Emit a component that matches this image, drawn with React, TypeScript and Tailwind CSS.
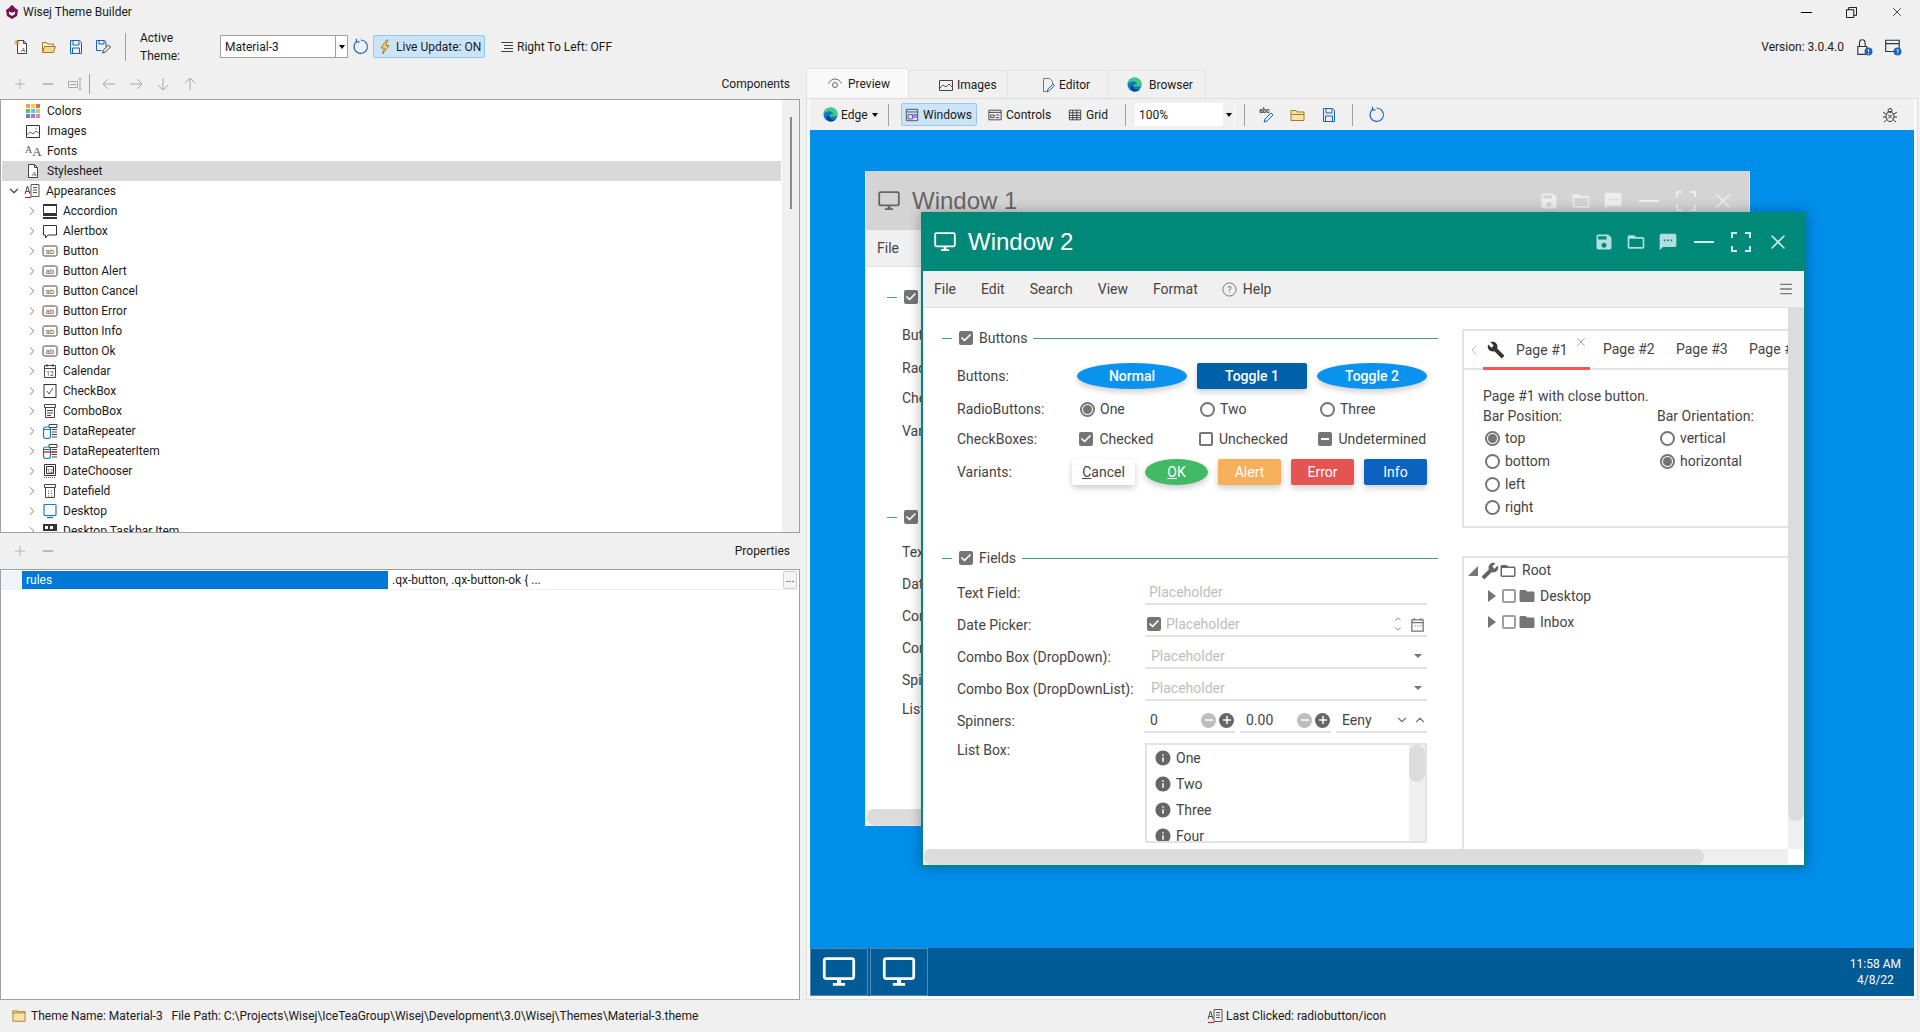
import type { ReactNode } from "react";
import { Check as CheckMark, ChevronDown, ChevronRight, ChevronUp, ChevronLeft, X, Minus, Menu, Plus } from "lucide-react";

type Svg = { className?: string };

const Ic = ({ children, className = "w-4 h-4" }: { children: ReactNode; className?: string }) => (
  <svg viewBox="0 0 16 16" fill="none" className={`shrink-0 ${className}`}>
    {children}
  </svg>
);

const M = ({ d, className = "w-6 h-6" }: { d: string; className?: string }) => (
  <svg viewBox="0 0 24 24" fill="currentColor" className={`shrink-0 ${className}`}>
    <path d={d} />
  </svg>
);

const SAVE = "M17 3H5c-1.11 0-2 .9-2 2v14c0 1.1.89 2 2 2h14c1.1 0 2-.9 2-2V7l-4-4zm-5 16c-1.66 0-3-1.34-3-3s1.34-3 3-3 3 1.34 3 3-1.34 3-3 3zm3-10H5V5h10v4z";
const FOLDER_O = "M20 6h-8l-2-2H4c-1.1 0-1.99.9-1.99 2L2 18c0 1.1.9 2 2 2h16c1.1 0 2-.9 2-2V8c0-1.1-.9-2-2-2zm0 12H4V8h16v10z";
const FOLDER = "M10 4H4c-1.1 0-2 .9-2 2v12c0 1.1.9 2 2 2h16c1.1 0 2-.9 2-2V8c0-1.1-.9-2-2-2h-8l-2-2z";
const SMS = "M20 2H4c-1.1 0-2 .9-2 2v18l4-4h14c1.1 0 2-.9 2-2V4c0-1.1-.9-2-2-2zM9 11H7V9h2v2zm4 0h-2V9h2v2zm4 0h-2V9h2v2z";
const WRENCH = "M22.7 19l-9.1-9.1c.9-2.3.4-5-1.5-6.9-2-2-5-2.4-7.4-1.3L9 6 6 9 1.6 4.7C.4 7.1.9 10.1 2.9 12.1c1.9 1.9 4.6 2.4 6.9 1.5l9.1 9.1c.4.4 1 .4 1.4 0l2.3-2.3c.5-.4.5-1.1.1-1.4z";
const INFO = "M12 2C6.48 2 2 6.48 2 12s4.48 10 10 10 10-4.48 10-10S17.52 2 12 2zm1 15h-2v-6h2v6zm0-8h-2V7h2v2z";

const MonitorIcon = ({ className = "w-6 h-6" }: Svg) => (
  <svg viewBox="0 0 24 22" fill="none" className={`shrink-0 ${className}`}>
    <rect x="1.2" y="1.2" width="21.6" height="14.6" rx="1.5" stroke="currentColor" strokeWidth="2" />
    <path d="M10.5 16.5h3V19h-3zM7.5 19h9v2h-9z" fill="currentColor" />
  </svg>
);

const Doc = ({ color = "#444" }: { color?: string }) => (
  <>
    <path d="M3.5 1.5h6l3 3v10h-9z" stroke={color} fill="#fff" />
    <path d="M9.5 1.5v3h3" stroke={color} />
  </>
);

const SaveOutline = () => (
  <Ic>
    <path d="M2.5 1.5h9l2 2v11h-11z" stroke="#1565c0" />
    <path d="M5 2v4h6V2M4.5 14V9h7v5" stroke="#1565c0" />
  </Ic>
);

const FolderOpen = ({ color = "#a87b14" }: { color?: string }) => (
  <Ic>
    <path d="M1.5 13.5v-10h4l1 1.5h6v2" stroke={color} />
    <path d="M1.5 13.5l2-6h11l-2 6z" stroke={color} fill="#f3d98b" />
  </Ic>
);

const Refresh = () => (
  <Ic className="w-[17px] h-[17px]">
    <path d="M4.4 3.2A6.3 6.3 0 1 0 8 1.9" stroke="#1565c0" strokeWidth="1.1" />
    <path d="M4.2 .8v2.8h2.9" stroke="#1565c0" strokeWidth="1.1" />
  </Ic>
);

const AbIcon = () => (
  <Ic>
    <rect x="1" y="3" width="14" height="10" rx="1.5" stroke="#444" />
    <text x="8" y="10.8" fontSize="7.5" textAnchor="middle" fill="#555" fontFamily="Roboto">ab</text>
  </Ic>
);

const CalIcon = ({ dots = false }: { dots?: boolean }) => (
  <Ic>
    <path d="M2.5 2.5h11v12h-11zM2.5 5.5h11M5 1v3M11 1v3" stroke="#444" />
    <text x="8" y="12.8" fontSize="6.5" textAnchor="middle" fill="#444" fontFamily="Roboto">{dots ? "" : "12"}</text>
  </Ic>
);

const ComboIcon = () => (
  <Ic>
    <path d="M2.5 1.5h11v3h-11zM3.5 4.5h9v10h-9zM5 7.5h6M5 10h6M5 12.5h4" stroke="#444" />
  </Ic>
);

const RepeaterIcon = ({ red = false }: { red?: boolean }) => (
  <Ic>
    <path d="M7 1.5h8v3H7zM10 6.5h5M10 9h5M10 11.5h5M10 14h5" stroke="#444" />
    <rect x="1.5" y="4" width="7" height="11.5" rx="2.5" stroke="#0f7fb5" strokeWidth="1.2" fill="#fff" />
    <path d="M1.5 6.5h7" stroke="#0f7fb5" />
    {red && <path d="M1 9h14" stroke="#e01b1b" strokeWidth="1.3" />}
  </Ic>
);

const TREE_ICONS: Record<string, ReactNode> = {
  accordion: (
    <Ic>
      <path d="M1 1h14v1.5H1zM1 11h14v2H1zM1 14h14v2H1z" fill="#333" />
      <path d="M1.5 2.5h13v8h-13z" stroke="#333" />
    </Ic>
  ),
  alertbox: (
    <Ic>
      <path d="M1.5 2.5h13v9.5H6L3.5 15v-3h-2z" stroke="#333" />
    </Ic>
  ),
  ab: <AbIcon />,
  calendar: <CalIcon />,
  checkbox: (
    <Ic>
      <rect x="2" y="1.5" width="12" height="13" stroke="#333" />
      <path d="M5 8l2 3 4-6" stroke="#555" />
    </Ic>
  ),
  combo: <ComboIcon />,
  repeater: <RepeaterIcon />,
  repeaterItem: <RepeaterIcon red />,
  chooser: (
    <Ic>
      <path d="M2.5 1.5h11v11h-11zM4.5 3.5h7v7h-7z" stroke="#333" />
      <path d="M2 14.5h12" stroke="#666" strokeDasharray="1 1" />
      <text x="8" y="9.5" fontSize="5.5" textAnchor="middle" fill="#333" fontFamily="Roboto">12</text>
    </Ic>
  ),
  datefield: (
    <Ic>
      <path d="M2.5 1.5h11v3h-11zM3.5 4.5h9v10h-9z" stroke="#444" />
      <path d="M6 8h1M9 8h1M6 10.5h1M9 10.5h1M6 13h1M9 13h1" stroke="#555" />
    </Ic>
  ),
  desktop: (
    <Ic>
      <rect x="2" y="1.5" width="12" height="11" rx="1" stroke="#1976d2" strokeWidth="1.2" />
      <path d="M5 14.5h6" stroke="#1976d2" strokeWidth="1.4" />
    </Ic>
  ),
  taskbar: (
    <Ic>
      <path d="M1 1h14v7H1zM1 10h14v1.5H1z" fill="#333" />
      <path d="M3 3h3v3H3zM8 3h3v3H8z" fill="#fff" />
    </Ic>
  ),
};

const CHILDREN: [string, string][] = [
  ["Accordion", "accordion"],
  ["Alertbox", "alertbox"],
  ["Button", "ab"],
  ["Button Alert", "ab"],
  ["Button Cancel", "ab"],
  ["Button Error", "ab"],
  ["Button Info", "ab"],
  ["Button Ok", "ab"],
  ["Calendar", "calendar"],
  ["CheckBox", "checkbox"],
  ["ComboBox", "combo"],
  ["DataRepeater", "repeater"],
  ["DataRepeaterItem", "repeaterItem"],
  ["DateChooser", "chooser"],
  ["Datefield", "datefield"],
  ["Desktop", "desktop"],
  ["Desktop Taskbar Item", "taskbar"],
];

const SWATCH = ["#f3a14b", "#f6d04d", "#e8655a", "#5bbf6a", "#62c4e0", "#b3d46a", "#5a86d8", "#a07bd6", "#e883b5"];

const AppearIcon = () => (
  <Ic>
    <path d="M1 11l2.5-8L6 11M2 8.5h3" stroke="#444" />
    <path d="M7 1.5h8v12H7zM9 4.5h4M9 7h4M9 9.5h4" stroke="#555" />
    <path d="M1 14.5h6" stroke="#d81b1b" strokeWidth="1.2" />
  </Ic>
);

function TopItem({ label, icon, active }: { label: string; icon: ReactNode; active?: boolean }) {
  return (
    <div className={`h-5 flex items-center pl-[23px] ml-px mr-[18px] ${active ? "bg-[#d9d9d9]" : ""}`}>
      {icon}
      <span className="ml-1.5">{label}</span>
    </div>
  );
}

function ThemeTree() {
  return (
    <div className="relative h-[434px] border border-[#a0a0a0] bg-white overflow-hidden pt-px">
      <TopItem
        label="Colors"
        icon={
          <div className="w-4 h-4 grid grid-cols-3 gap-px p-px shrink-0">
            {SWATCH.map((c) => (
              <span key={c} style={{ backgroundColor: c }} />
            ))}
          </div>
        }
      />
      <TopItem
        label="Images"
        icon={
          <Ic>
            <path d="M1.5 2.5h13v12h-13z" stroke="#333" />
            <path d="M2 12l3-3 3 2 3-3 3 2" stroke="#2a79c9" />
            <circle cx="11" cy="5.5" r="1" fill="#e0a030" />
          </Ic>
        }
      />
      <TopItem
        label="Fonts"
        icon={
          <span className="w-4 shrink-0 font-['Liberation_Serif',serif] text-[#555] text-[13px] leading-none">
            <span className="text-[10px] align-top">A</span>A
          </span>
        }
      />
      <TopItem
        label="Stylesheet"
        active
        icon={
          <Ic>
            <Doc />
            <text x="9" y="13" fontSize="7" fontStyle="italic" textAnchor="middle" fill="#333" fontFamily="Liberation Serif">A</text>
          </Ic>
        }
      />
      <div className="h-5 flex items-center pl-[6px]">
        <ChevronDown className="w-3.5 h-3.5 text-[#444]" strokeWidth={2} />
        <span className="ml-[3px]">
          <AppearIcon />
        </span>
        <span className="ml-[6px]">Appearances</span>
      </div>
      {CHILDREN.map(([name, icon]) => (
        <div key={name} className="h-5 flex items-center pl-[24px]">
          <ChevronRight className="w-3.5 h-3.5 text-[#777]" strokeWidth={1.5} />
          <span className="ml-[3px]">{TREE_ICONS[icon]}</span>
          <span className="ml-[5px] whitespace-nowrap">{name}</span>
        </div>
      ))}
      <div className="absolute right-0 top-0 bottom-0 w-[17px] bg-[#f0f0f0]">
        <div className="mt-[17px] mx-auto w-[2px] h-[92px] bg-[#8a8a8a]" />
      </div>
    </div>
  );
}

const Gray = "#a8a8a8";

function LeftToolbar() {
  return (
    <div className="h-[31px] flex items-center pl-[12px] pr-[10px]">
      <Plus className="w-4 h-4 text-[#a8a8a8]" strokeWidth={1.2} />
      <Minus className="w-4 h-4 ml-[12px] text-[#a8a8a8]" strokeWidth={2} />
      <span className="ml-[11px]">
        <Ic>
          <path d="M1.5 5.5h9v6h-9zM13 3v10M11.5 3h3M11.5 13h3M3 8.5h6" stroke={Gray} />
        </Ic>
      </span>
      <div className="ml-[6px] w-px h-[20px] bg-[#a0a0a0]" />
      <div className="ml-[11px] flex gap-[11px]">
        {["M14 8H2M7 3L2 8l5 5", "M2 8h12M9 3l5 5-5 5", "M8 2v12M3 9l5 5 5-5", "M8 14V2M3 7l5-5 5 5"].map((d) => (
          <Ic key={d}>
            <path d={d} stroke={Gray} />
          </Ic>
        ))}
      </div>
      <span className="ml-auto text-[#222]">Components</span>
    </div>
  );
}

function PropertyGrid() {
  return (
    <div className="flex-1 border border-[#a0a0a0] bg-white pt-px">
      <div className="h-[19px] flex border-b border-[#f0f0f0]">
        <div className="w-[21px] bg-[#f0f4fa]" />
        <div className="w-[366px] bg-[#0078d7] text-white pl-[4px] leading-[18px]">rules</div>
        <div className="pl-[4px] leading-[18px] flex-1">.qx-button, .qx-button-ok {"{"} ...</div>
        <div className="w-[14px] mr-[2px] bg-[#f5f5f5] border border-[#d0d0d0] rounded-[2px] text-center leading-[14px] text-[11px]">...</div>
      </div>
    </div>
  );
}

function TopToolbar() {
  return (
    <div className="h-[44px] flex items-center pl-[8px] pt-[1px]">
      <div className="w-[27px] flex justify-center">
        <Ic>
          <Doc />
          <text x="9" y="13" fontSize="7" fontStyle="italic" textAnchor="middle" fill="#333" fontFamily="Liberation Serif">A</text>
          <path d="M3 1v5M.5 3.5h5M1 1.5l4 4M5 1.5l-4 4" stroke="#c98a1a" strokeWidth=".8" />
        </Ic>
      </div>
      <div className="w-[27px] flex justify-center"><FolderOpen /></div>
      <div className="w-[27px] flex justify-center"><SaveOutline /></div>
      <div className="w-[27px] flex justify-center">
        <Ic>
          <path d="M1.5 1.5h8l1.5 1.5v5M1.5 1.5v10h5" stroke="#1565c0" />
          <path d="M4 2v3h5V2" stroke="#1565c0" />
          <path d="M7.5 14l1-3 5-5 2 2-5 5z" stroke="#444" />
        </Ic>
      </div>
      <div className="ml-[9px] w-px h-[28px] bg-[#a0a0a0]" />
      <span className="ml-[14px] w-[75px]">Active Theme:</span>
      <div className="ml-[5px] w-[128px] h-[23px] border border-[#a0a0a0] bg-white flex items-center pl-1">
        <span className="flex-1">Material-3</span>
        <div className="w-[12px] h-full border-l border-[#a0a0a0] flex items-center justify-center">
          <span className="border-x-[3px] border-t-[4px] border-x-transparent border-t-black" />
        </div>
      </div>
      <div className="ml-[4px]"><Refresh /></div>
      <div className="ml-[4px] w-[112px] h-[23px] rounded-[2px] border border-[#90c8f6] bg-[#cce4f7] flex items-center pl-[3px]">
        <Ic>
          <path d="M9.5 1L4 9h3.5L5.5 15 12 6.5H8.5L11 1z" stroke="#a87b14" fill="#f3d98b" />
        </Ic>
        <span className="ml-[3px]">Live Update: ON</span>
      </div>
      <div className="ml-[13px]">
        <Ic>
          <path d="M3 3.5h12M6 6.5h9M6 9.5h9M3 12.5h12" stroke="#444" />
        </Ic>
      </div>
      <span className="ml-[3px]">Right To Left: OFF</span>
      <span className="ml-auto">Version: 3.0.4.0</span>
      <div className="ml-[11px]">
        <Ic className="w-[18px] h-[18px]">
          <path d="M2.5 7.5h8v7h-8zM4 7.5V4a2.5 2.5 0 0 1 5 0v3.5" stroke="#333" />
          <circle cx="12" cy="12" r="3.5" fill="#1565c0" />
          <path d="M12 10v2.5M12 13.5v1" stroke="#fff" />
        </Ic>
      </div>
      <div className="ml-[11px] mr-[18px]">
        <Ic className="w-[18px] h-[18px]">
          <path d="M1.5 2h12v10h-12zM1.5 5h12" stroke="#333" />
          <circle cx="12" cy="12" r="3.5" fill="#1565c0" />
          <path d="M11 11a1 1 0 1 1 1 1.4v.6M12 14v.6" stroke="#fff" strokeWidth=".8" />
        </Ic>
      </div>
    </div>
  );
}

const TABS = [
  { name: "Images", w: "w-[99px]", pad: "pl-[29px]", icon: <Ic><path d="M1.5 3.5h13v10h-13z" stroke="#444" /><path d="M2 11l3-3 3 2 3-3 3 3" stroke="#555" /></Ic> },
  { name: "Editor", w: "w-[100px]", pad: "pl-[32px]", icon: <Ic><path d="M3.5 1.5h6l3 3v3M3.5 1.5v13h3" stroke="#777" /><path d="M7 15l1-3 5-5 1.5 1.5-5 5z" stroke="#1565c0" /></Ic> },
];

function EdgeLogo({ className = "w-[15px] h-[15px]" }: Svg) {
  return (
    <svg viewBox="0 0 16 16" className={`shrink-0 ${className}`}>
      <circle cx="8" cy="8" r="7.5" fill="#0c7bc7" />
      <path d="M1 7c1-4 4-6.5 7.5-6.5S15.500 3 15.500 8c0 1-1 2-3 2H7c0-3 4-3 4-1 0-3-2-5-5-4.500C3.500 5 2 6 1 7z" fill="#3fcf80" />
      <path d="M7 10c0 3 3 4.500 7 3-1.500 1.500-3.500 2.500-6 2.500C5 15.500 3 12 4.500 9 5.500 9.500 6.500 9.500 7 10z" fill="#0a3f8a" />
    </svg>
  );
}

function PreviewTabs() {
  return (
    <div className="h-[30px] flex items-end">
      <div className="w-[103px] h-[30px] bg-[#f9f9f9] border border-b-0 border-[#e2e2e2] flex items-center pl-[20px] rounded-t-[2px]">
        <Ic>
          <path d="M1.5 7.500C3 4.500 5.500 3 8 3s5 1.500 6.500 4.500" stroke="#666" />
          <circle cx="8" cy="9" r="2.500" stroke="#666" />
        </Ic>
        <span className="ml-[5px]">Preview</span>
      </div>
      {TABS.map((t) => (
        <div key={t.name} className={`${t.w} ${t.pad} h-[28px] border border-l-0 border-b-0 border-[#e2e2e2] flex items-center`}>
          {t.icon}
          <span className="ml-[3px]">{t.name}</span>
        </div>
      ))}
      <div className="w-[98px] h-[28px] pl-[19px] border border-l-0 border-b-0 border-[#e2e2e2] flex items-center">
        <EdgeLogo />
        <span className="ml-[7px]">Browser</span>
      </div>
    </div>
  );
}

const Sep = ({ className = "" }: { className?: string }) => <div className={`w-px h-[22px] bg-[#a0a0a0] ${className}`} />;

function PreviewToolbar() {
  return (
    <div className="h-[31px] bg-[#f0f0f0] flex items-center">
      <span className="ml-[13px]"><EdgeLogo /></span>
      <span className="ml-[3px] w-[26px]">Edge</span>
      <span className="ml-[5px] border-x-[3px] border-t-[4px] border-x-transparent border-t-black" />
      <Sep className="ml-[10px]" />
      <div className="ml-[12px] w-[76px] h-[23px] rounded-[2px] border border-[#90c8f6] bg-[#cce4f7] flex items-center pl-[3px]">
        <Ic className="w-[14px] h-[14px]">
          <path d="M1.500 1.500h13v13h-13zM1.500 4.500h13" stroke="#444" />
          <path d="M3.500 7.500h5v5h-5zM10 7.500h3v3h-3z" stroke="#6a3fb5" />
        </Ic>
        <span className="ml-[4px]">Windows</span>
      </div>
      <span className="ml-[11px]">
        <Ic className="w-[14px] h-[14px]">
          <path d="M1 2.500h14v11H1zM1 5h14M3 8h4v3H3zM9 8h4M9 11h4" stroke="#333" />
        </Ic>
      </span>
      <span className="ml-[4px] w-[46px]">Controls</span>
      <span className="ml-[16px]">
        <Ic className="w-[14px] h-[14px]">
          <path d="M1.500 2.500h13v11h-13zM1.500 5.500h13M1.500 8.500h13M1.500 11h13M5.500 2.500v11M10 2.500v11" stroke="#333" />
        </Ic>
      </span>
      <span className="ml-[4px] w-[22px]">Grid</span>
      <Sep className="ml-[17px]" />
      <div className="ml-[9px] w-[100px] h-[23px] bg-white flex items-center pl-[4px]">
        <span className="flex-1">100%</span>
        <div className="w-[11px] mr-px h-full bg-[#f0f0f0] flex items-center justify-center">
          <span className="border-x-[3px] border-t-[4px] border-x-transparent border-t-black" />
        </div>
      </div>
      <Sep className="ml-[9px]" />
      <span className="ml-[14px]">
        <Ic>
          <text x="5.500" y="6" fontSize="6.500" fontWeight="700" textAnchor="middle" fill="#333" fontFamily="Roboto">abc</text>
          <path d="M5 15l1-3 6-6 2 2-6 6z" stroke="#1565c0" />
        </Ic>
      </span>
      <span className="ml-[15px]">
        <Ic>
          <path d="M1 13.500v-10h5l1 1.500h7v8.500zM1 7.500h13" stroke="#a87b14" fill="#f5e3ad" />
        </Ic>
      </span>
      <span className="ml-[15px]"><SaveOutline /></span>
      <Sep className="ml-[15px]" />
      <span className="ml-[15px]"><Refresh /></span>
      <span className="ml-auto mr-[16px]">
        <Ic>
          <ellipse cx="8" cy="9.500" rx="4" ry="5" stroke="#333" />
          <circle cx="8" cy="3.500" r="2" stroke="#333" />
          <path d="M1 5l3 2M15 5l-3 2M1 10h3M15 10h-3M2 15l2.500-2M14 15l-2.500-2M6 7.500l4 4M10 7.500l-4 4" stroke="#333" />
        </Ic>
      </span>
    </div>
  );
}

function FormCheck({ state = "on", className = "" }: { state?: "on" | "off" | "mid"; className?: string }) {
  if (state === "off") return <span className={`w-[14px] h-[14px] shrink-0 border-2 border-[#757575] rounded-[2px] ${className}`} />;
  return (
    <span className={`w-[14px] h-[14px] shrink-0 bg-[#757575] rounded-[2px] flex items-center justify-center ${className}`}>
      {state === "on" ? <CheckMark className="w-[12px] h-[12px] text-white" strokeWidth={3.5} /> : <span className="w-2 h-[2px] bg-white" />}
    </span>
  );
}

function Radio({ on, label, className = "" }: { on?: boolean; label: string; className?: string }) {
  return (
    <div className={`flex items-center ${className}`}>
      <span className="w-[15px] h-[15px] shrink-0 rounded-full border-2 border-[#757575] flex items-center justify-center">
        {on && <span className="w-[9px] h-[9px] rounded-full bg-[#757575]" />}
      </span>
      <span className="ml-[5px]">{label}</span>
    </div>
  );
}

function Legend({ label, active }: { label: string; active: boolean }) {
  return (
    <div className="h-5 flex items-center">
      <span className="w-[10px] h-px bg-[#3aa76d]" />
      <FormCheck className="ml-[7px]" />
      <span className="ml-[6px]">{active ? label : ""}</span>
      {active && <span className="ml-[6px] flex-1 h-px bg-[#3aa76d]" />}
    </div>
  );
}

const raised = "shadow-[0_3px_6px_rgba(0,0,0,0.2)]";

function FieldRow({ label, children }: { label: string; children: ReactNode }) {
  return (
    <div className="h-8 flex items-end">
      <span className="w-[188px] h-[24px] flex items-center pt-px">{label}</span>
      <div className="w-[282px] h-[24px] border-b-2 border-[#e3e3e3] flex items-center text-[#bdbdbd]">{children}</div>
    </div>
  );
}

const Caret = () => <span className="ml-auto mr-[5px] border-x-[4px] border-t-[4px] border-x-transparent border-t-[#757575]" />;

function SpinBtns() {
  return (
    <div className="ml-auto flex gap-[3px] mr-[1px]">
      <span className="w-[15px] h-[15px] rounded-full bg-[#bdbdbd] flex items-center justify-center"><Minus className="w-3 h-3 text-white" strokeWidth={3} /></span>
      <span className="w-[15px] h-[15px] rounded-full bg-[#666] flex items-center justify-center"><Plus className="w-3 h-3 text-white" strokeWidth={3} /></span>
    </div>
  );
}

function WindowForm() {
  return (
    <div className="w-[539px] shrink-0 pl-[19px] pr-[24px] pt-[20px] overflow-hidden">
      <Legend label="Buttons" active />
      <div className="pl-[15px]">
        <div className="mt-[15px] flex items-center h-[26px]">
          <span className="w-[120px]">Buttons:</span>
          <div className="flex gap-[10px] text-white font-medium">
            <span className={`w-[110px] h-[26px] rounded-[50%] bg-[#0a93ee] flex items-center justify-center ${raised}`}>Normal</span>
            <span className={`w-[110px] h-[26px] rounded-[2px] bg-[#0060a8] flex items-center justify-center ${raised}`}>Toggle 1</span>
            <span className={`w-[110px] h-[26px] rounded-[50%] bg-[#0a93ee] flex items-center justify-center ${raised}`}>Toggle 2</span>
          </div>
        </div>
        <div className="mt-2 flex items-center h-6">
          <span className="w-[123px]">RadioButtons:</span>
          <Radio on label="One" className="w-[120px]" />
          <Radio label="Two" className="w-[120px]" />
          <Radio label="Three" />
        </div>
        <div className="mt-1.5 flex items-center h-6">
          <span className="w-[123px]">CheckBoxes:</span>
          {([["on", "Checked"], ["off", "Unchecked"], ["mid", "Undetermined"]] as const).map(([s, l]) => (
            <div key={l} className="w-[120px] flex items-center">
              <FormCheck state={s} />
              <span className="ml-[6px]">{l}</span>
            </div>
          ))}
        </div>
        <div className="mt-2 flex items-center h-[26px]">
          <span className="w-[115px]">Variants:</span>
          <div className="flex gap-[10px]">
            <span className={`w-[63px] h-[26px] rounded-[2px] bg-white flex items-center justify-center ${raised}`}><span><u>C</u>ancel</span></span>
            <span className={`w-[63px] h-[26px] rounded-[50%] bg-[#42b964] text-white flex items-center justify-center ${raised}`}><span><u>O</u>K</span></span>
            <span className={`w-[63px] h-[26px] rounded-[2px] bg-[#f6af5b] text-white flex items-center justify-center ${raised}`}>Alert</span>
            <span className={`w-[63px] h-[26px] rounded-[2px] bg-[#e55353] text-white flex items-center justify-center ${raised}`}>Error</span>
            <span className={`w-[63px] h-[26px] rounded-[2px] bg-[#0b62c0] text-white flex items-center justify-center ${raised}`}>Info</span>
          </div>
        </div>
      </div>
      <div className="mt-[63px]">
        <Legend label="Fields" active />
      </div>
      <div className="pl-[15px] mt-[5px]">
        <FieldRow label="Text Field:"><span className="pl-1">Placeholder</span></FieldRow>
        <FieldRow label="Date Picker:">
          <FormCheck className="ml-[2px]" />
          <span className="ml-[5px]">Placeholder</span>
          <div className="ml-auto flex flex-col text-[#757575]">
            <ChevronUp className="w-3 h-[10px]" />
            <ChevronDown className="w-3 h-[10px]" />
          </div>
          <span className="ml-[6px] mr-[2px] text-[#757575]">
            <Ic className="w-[15px] h-[15px]">
              <path d="M2 3h12v12H2zM2 6h12M4.500 1v2M11.500 1v2M5 9.500h1M8 9.500h1M11 9.500h1" stroke="currentColor" strokeWidth="1.400" />
            </Ic>
          </span>
        </FieldRow>
        <FieldRow label="Combo Box (DropDown):"><span className="pl-[6px]">Placeholder</span><Caret /></FieldRow>
        <FieldRow label="Combo Box (DropDownList):"><span className="pl-[6px]">Placeholder</span><Caret /></FieldRow>
        <div className="h-8 flex items-end">
          <span className="w-[187px] h-[24px] flex items-center pt-px">Spinners:</span>
          <div className="flex gap-[5px] text-[#444]">
            <div className="w-[91px] h-[24px] border-b-2 border-[#e3e3e3] flex items-center pl-[6px]">0<SpinBtns /></div>
            <div className="w-[91px] h-[24px] border-b-2 border-[#e3e3e3] flex items-center pl-[6px]">0.00<SpinBtns /></div>
            <div className="w-[91px] h-[24px] border-b-2 border-[#e3e3e3] flex items-center pl-[6px]">
              Eeny
              <ChevronDown className="ml-auto w-3.5 h-3.5 text-[#757575]" />
              <ChevronUp className="ml-1 w-3.5 h-3.5 text-[#757575]" />
            </div>
          </div>
        </div>
        <div className="mt-[10px] flex">
          <span className="w-[188px] leading-[14px]">List Box:</span>
          <div className="w-[282px] h-[100px] border-2 border-[#e3e3e3] flex overflow-hidden">
            <div className="flex-1 pl-[7px]">
              {["One", "Two", "Three", "Four"].map((t) => (
                <div key={t} className="h-[26px] flex items-center text-[#444]">
                  <M d={INFO} className="w-[18px] h-[18px] text-[#666]" />
                  <span className="ml-[4px]">{t}</span>
                </div>
              ))}
            </div>
            <div className="w-[16px] bg-[#f0f0f0]">
              <div className="h-[37px] rounded-full bg-[#dcdcdc]" />
            </div>
          </div>
        </div>
      </div>
    </div>
  );
}

function WindowSide() {
  return (
    <div className="w-[326px] shrink-0 flex flex-col overflow-hidden">
      <div className="mt-[21px] w-[420px] h-[199px] border-2 border-[#e3e3e3]">
        <div className="h-[39px] border-b-2 border-[#e3e3e3] flex items-end whitespace-nowrap">
          <div className="w-[19px] h-full flex items-center justify-center text-[#bdbdbd]"><ChevronLeft className="w-4 h-4" strokeWidth={1.5} /></div>
          <div className="relative w-[107px] h-full border-b-[3px] border-[#ff5252] mb-[-2px] flex items-center pl-[4px]">
            <M d={WRENCH} className="w-[18px] h-[18px] text-[#333]" />
            <span className="ml-[11px]">Page #1</span>
            <X className="absolute right-[2px] top-[2px] w-3.5 h-3.5 text-[#999]" strokeWidth={1.5} />
          </div>
          <span className="ml-[13px] w-[73px] h-full flex items-center">Page #2</span>
          <span className="w-[73px] h-full flex items-center">Page #3</span>
          <span className="h-full flex items-center">Page #4</span>
        </div>
        <div className="pl-[19px] pt-[16px]">
          <div className="h-5 leading-5">Page #1 with close button.</div>
          <div className="flex">
            <div className="w-[174px]">
              <div className="h-[21px] leading-[21px]">Bar Position:</div>
              {["top", "bottom", "left", "right"].map((p, i) => (
                <Radio key={p} on={i === 0} label={p} className="h-[23px] pl-[2px]" />
              ))}
            </div>
            <div>
              <div className="h-[21px] leading-[21px]">Bar Orientation:</div>
              <Radio label="vertical" className="h-[23px] pl-[3px]" />
              <Radio on label="horizontal" className="h-[23px] pl-[3px]" />
            </div>
          </div>
        </div>
      </div>
      <div className="mt-[28px] w-[420px] flex-1 border-t-2 border-l-2 border-[#e3e3e3]">
        <div className="h-[25px] flex items-center pl-[4px] text-[#444]">
          <span className="w-0 h-0 border-l-[10px] border-b-[10px] border-l-transparent border-b-[#757575]" />
          <M d={WRENCH} className="ml-[3px] w-[18px] h-[18px] text-[#666] -scale-x-100" />
          <M d={FOLDER_O} className="w-[18px] h-[18px] text-[#666]" />
          <span className="ml-[5px]">Root</span>
        </div>
        {["Desktop", "Inbox"].map((n) => (
          <div key={n} className="h-[26px] flex items-center pl-[24px]">
            <span className="w-0 h-0 border-l-[8px] border-y-[6px] border-l-[#757575] border-y-transparent" />
            <span className="ml-[6px] w-[14px] h-[14px] border-2 border-[#9e9e9e] rounded-[2px]" />
            <M d={FOLDER} className="ml-[2px] w-[18px] h-[18px] text-[#757575]" />
            <span className="ml-[4px]">{n}</span>
          </div>
        ))}
      </div>
    </div>
  );
}

function Window({ title, active, className, children }: { title: string; active: boolean; className: string; children: ReactNode }) {
  const btn = active ? "text-[#b2dfdb]" : "text-[#eeeeee]";
  const ctl = active ? "text-[#d0ece8]" : "text-[#eeeeee]";
  return (
    <div className={`absolute w-[885px] h-[655px] flex flex-col bg-white font-['Roboto',sans-serif] text-[14px] text-[#444] ${active ? "border-2 border-t-0 border-[#00897b] shadow-[0_0_12px_rgba(0,0,0,0.3)]" : "border border-t-0 border-[#e8e8e8]"} ${className}`}>
      <div className={`h-[59px] shrink-0 flex items-center ${active ? "bg-[#008979] text-white pl-[11px]" : "bg-[#d4d4d4] text-[#666] pl-[12px]"} font-['Liberation_Sans',sans-serif]`}>
        <MonitorIcon className="w-[22px] h-[20px]" />
        <span className="ml-[12px] text-[24px]">{title}</span>
        <div className={`ml-auto flex items-center ${btn}`}>
          <M d={SAVE} className="w-5 h-5" />
          <M d={FOLDER_O} className="ml-[12px] w-5 h-5" />
          <M d={SMS} className="ml-[12px] w-5 h-5" />
        </div>
        <div className={`flex items-center ml-[16px] mr-[14px] ${ctl}`}>
          <span className="w-[20px] h-[2px] bg-current" />
          <svg viewBox="0 0 20 20" fill="none" stroke="currentColor" strokeWidth="2" className="ml-[17px] w-[20px] h-[20px]">
            <path d="M1 6V1h5M14 1h5v5M19 14v5h-5M6 19H1v-5" />
          </svg>
          <X className="ml-[15px] w-[24px] h-[24px]" strokeWidth={1.6} />
        </div>
      </div>
      <div className="h-[37px] shrink-0 bg-[#f0f0f0] border-b border-[#e0e0e0] flex items-center pl-[11px] gap-[25px]">
        <span>File</span>
        {active && <span>Edit</span>}
        {active && <span>Search</span>}
        {active && <span>View</span>}
        {active && <span>Format</span>}
        {active && (
          <span className="flex items-center -ml-[1px]">
            <Ic className="w-[15px] h-[15px]">
              <circle cx="8" cy="8" r="7" stroke="#757575" />
              <text x="8" y="11.500" fontSize="10" textAnchor="middle" fill="#757575" fontFamily="Roboto">?</text>
            </Ic>
            <span className="ml-[6px]">Help</span>
          </span>
        )}
        {active && <Menu className="ml-auto mr-[10px] w-4 h-4 text-[#757575]" />}
      </div>
      {children}
      <div className="h-4 shrink-0 flex bg-[#efefef]">
        <div className="w-[780px] ml-[1px] h-full rounded-full bg-[#dcdcdc]" />
        <div className="ml-auto w-4 h-full bg-white" />
      </div>
    </div>
  );
}

function Window1Labels() {
  return (
    <div className="flex-1 min-h-0 pl-[21px] pt-[20px]">
      <Legend label="Buttons" active={false} />
      <div className="pl-[15px] text-[14px]">
        <div className="mt-[15px] h-[26px] leading-[26px]">Buttons:</div>
        <div className="mt-2 h-6 leading-6">Rad</div>
        <div className="mt-1.5 h-6 leading-6">Che</div>
        <div className="mt-2 h-[26px] leading-[26px]">Var</div>
      </div>
      <div className="mt-[63px]"><Legend label="Fields" active={false} /></div>
      <div className="pl-[15px] mt-[5px]">
        {["Tex", "Dat", "Con", "Con", "Spi"].map((l, i) => (
          <div key={i} className="h-8 flex items-end"><span className="h-6 leading-6">{l}</span></div>
        ))}
        <div className="mt-[10px] leading-[14px]">List</div>
      </div>
    </div>
  );
}

function Desktop() {
  return (
    <div className="flex-1 min-h-0 flex flex-col bg-[#008eeb]">
      <div className="relative flex-1 min-h-0">
        <Window title="Window 1" active={false} className="left-[55px] top-[41px]">
          <Window1Labels />
        </Window>
        <Window title="Window 2" active className="left-[111px] top-[82px]">
          <div className="flex-1 min-h-0 flex">
            <WindowForm />
            <WindowSide />
            <div className="w-4 shrink-0 bg-[#efefef]">
              <div className="h-[513px] rounded-b-full bg-[#dcdcdc]" />
            </div>
          </div>
        </Window>
      </div>
      <div className="h-[48px] shrink-0 bg-[#005b96] flex text-white">
        {[0, 1].map((i) => (
          <div key={i} className="w-[58px] mr-[2px] border border-[#5a88ad] flex items-center justify-center">
            <MonitorIcon className="w-[34px] h-[30px]" />
          </div>
        ))}
        <div className="ml-auto mr-[13px] flex flex-col items-center justify-center text-[12px] leading-[16px]">
          <span>11:58 AM</span>
          <span>4/8/22</span>
        </div>
      </div>
    </div>
  );
}

export default function App() {
  return (
    <div className="w-[1920px] h-[1032px] overflow-hidden bg-[#f0f0f0] flex flex-col font-['Roboto',sans-serif] text-[12px] text-[#1a1a1a]">
      <div className="h-[24px] shrink-0 flex items-center pl-[4px]">
        <svg viewBox="0 0 16 16" className="w-4 h-4">
          <path d="M8 1c-1 1-2 1-3 3L2 6l1 6 5 3 5-3 1-6-3-2C10 2 9 2 8 1z" fill="#7a0f55" />
          <path d="M5 7c1 2 5 2 6 0v3l-3 2-3-2z" fill="#fff" />
        </svg>
        <span className="ml-[3px]">Wisej Theme Builder</span>
        <div className="ml-auto mr-[16px] flex items-center text-black">
          <span className="w-[11px] h-px bg-current" />
          <svg viewBox="0 0 12 12" fill="none" stroke="currentColor" className="ml-[34px] w-[11px] h-[11px]">
            <path d="M.500 3h8v8.500h-8zM3 3V.500h8.500V9H8.500" />
          </svg>
          <X className="ml-[33px] w-[14px] h-[14px]" strokeWidth={1.2} />
        </div>
      </div>
      <TopToolbar />
      <div className="flex-1 min-h-0 flex">
        <div className="w-[800px] shrink-0 flex flex-col">
          <LeftToolbar />
          <ThemeTree />
          <div className="h-[36px] shrink-0 flex items-center pl-[12px] pr-[10px]">
            <Plus className="w-4 h-4 text-[#a8a8a8]" strokeWidth={1.2} />
            <Minus className="w-4 h-4 ml-[12px] text-[#a8a8a8]" strokeWidth={2} />
            <span className="ml-auto">Properties</span>
          </div>
          <PropertyGrid />
        </div>
        <div className="ml-[6px] flex-1 min-w-0 flex flex-col">
          <PreviewTabs />
          <div className="flex-1 min-h-0 flex flex-col bg-[#f9f9f9] border border-[#dcdcdc] px-[3px] pb-[3px] mr-[2px]">
            <PreviewToolbar />
            <Desktop />
          </div>
        </div>
      </div>
      <div className="h-[32px] shrink-0 flex items-center pl-[12px]">
        <Ic className="w-[14px] h-[14px]">
          <path d="M1 2h5v1h9v11H1zM1 4.500h14" stroke="#a87b14" fill="#f5e3ad" />
        </Ic>
        <span className="ml-[5px] w-[656px] whitespace-nowrap">Theme Name: Material-3&nbsp;&nbsp; File Path: C:\Projects\Wisej\IceTeaGroup\Wisej\Development\3.0\Wisej\Themes\Material-3.theme</span>
        <span className="ml-[520px]"><AppearIcon /></span>
        <span className="ml-[3px] whitespace-nowrap">Last Clicked: radiobutton/icon</span>
      </div>
    </div>
  );
}
